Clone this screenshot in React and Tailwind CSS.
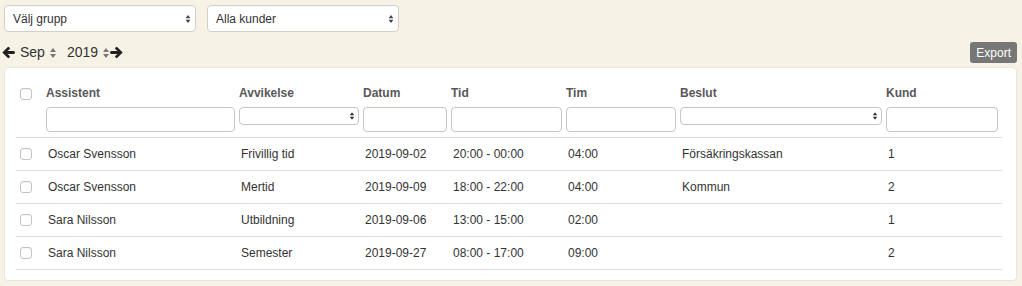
import React from "react";

function UpDown({ className = "" }) {
  return (
    <svg width="6" height="10" viewBox="0 0 6 10" className={className}>
      <path d="M3 0 L6 4 L0 4 Z" fill="currentColor" />
      <path d="M0 6 L6 6 L3 10 Z" fill="currentColor" />
    </svg>
  );
}

function Arrow({ dir = "left", className = "" }) {
  return (
    <svg width="13" height="13" viewBox="0 0 13 13" className={className} style={dir === "right" ? { transform: "scaleX(-1)" } : undefined}>
      <path
        d="M0.3 6.5 L5.6 1.2 Q6.3 0.5 7 1.2 L7.6 1.8 Q8.3 2.5 7.6 3.2 L5.4 5.1 H11.9 Q12.8 5.1 12.8 6 V7 Q12.8 7.9 11.9 7.9 H5.4 L7.6 9.8 Q8.3 10.5 7.6 11.2 L7 11.8 Q6.3 12.5 5.6 11.8 Z"
        fill="currentColor"
      />
    </svg>
  );
}

function Check() {
  return <div className="w-[12px] h-[12px] rounded-[3px] border border-[#c4c4c4] bg-white shadow-[inset_0_1px_1px_rgba(0,0,0,0.05)]" />;
}

function TopSelect({ label }) {
  return (
    <div className="w-[192px] h-[27px] bg-white border border-[#d2cfc6] rounded-[4px] flex items-center justify-between pl-[8px] pr-[4px] text-[12px] text-[#333]">
      <span>{label}</span>
      <UpDown className="text-[#444] scale-[0.8]" />
    </div>
  );
}

const rows = [
  ["Oscar Svensson", "Frivillig tid", "2019-09-02", "20:00 - 00:00", "04:00", "Försäkringskassan", "1"],
  ["Oscar Svensson", "Mertid", "2019-09-09", "18:00 - 22:00", "04:00", "Kommun", "2"],
  ["Sara Nilsson", "Utbildning", "2019-09-06", "13:00 - 15:00", "02:00", "", "1"],
  ["Sara Nilsson", "Semester", "2019-09-27", "08:00 - 17:00", "09:00", "", "2"],
];

function TextBox() {
  return <div className="w-full h-[25px] bg-white border border-[#c6c6c6] rounded-[4px]" />;
}
function SmallSelect() {
  return (
    <div className="w-full h-[18px] bg-white border border-[#c6c6c6] rounded-[4px] flex items-center justify-end pr-[3px]">
      <UpDown className="text-[#333] scale-[0.75]" />
    </div>
  );
}

export default function App() {
  const headers = [
    ["Assistent", <TextBox key="a" />],
    ["Avvikelse", <SmallSelect key="b" />],
    ["Datum", <TextBox key="c" />],
    ["Tid", <TextBox key="d" />],
    ["Tim", <TextBox key="e" />],
    ["Beslut", <SmallSelect key="f" />],
    ["Kund", <TextBox key="g" />],
  ];
  return (
    <div
      className="w-[1022px] h-[286px] bg-[#f6f2e6] pt-[5px] pl-[4px] pr-[5px] overflow-hidden"
      style={{ fontFamily: '"Liberation Sans", Arial, Helvetica, sans-serif' }}
    >
      <div className="flex gap-[11px]">
        <TopSelect label="Välj grupp" />
        <TopSelect label="Alla kunder" />
      </div>
      <div className="flex items-center justify-between mt-[10px] h-[21px]">
        <div className="flex items-center text-[14px] text-[#333] -ml-[2px]">
          <Arrow dir="left" className="text-[#222]" />
          <span className="ml-[5px]">Sep</span>
          <UpDown className="ml-[5px] text-[#777]" />
          <span className="ml-[11px]">2019</span>
          <UpDown className="ml-[5px] text-[#777]" />
          <Arrow dir="right" className="ml-[1px] text-[#222]" />
        </div>
        <div className="h-[21px] px-[6px] rounded-[3px] bg-[#777] text-white text-[12px] flex items-center">Export</div>
      </div>
      <div className="mt-[4px] h-[214px] bg-white border border-[#ebe6d9] rounded-[4px] pt-[16px] pl-[11px] pr-[14px]">
        <table className="table-fixed border-collapse w-[986px]">
          <colgroup>
            <col className="w-[28px]" />
            <col className="w-[193px]" />
            <col className="w-[124px]" />
            <col className="w-[88px]" />
            <col className="w-[115px]" />
            <col className="w-[114px]" />
            <col className="w-[206px]" />
            <col className="w-[118px]" />
          </colgroup>
          <thead>
            <tr className="border-b border-[#dddddd]">
              <th className="align-top pl-[4px] pt-[4px] pb-[6px]">
                <Check />
              </th>
              {headers.map(([h, el], i) => (
                <th key={h} className={"align-top text-left px-[2px] pb-[5px] " + (i === 6 ? "pr-[4px]" : "")}>
                  <div className="h-[18px] leading-[18px] text-[12px] font-bold text-[#585858]">{h}</div>
                  <div className="mt-[5px] h-[25px]">{el}</div>
                </th>
              ))}
            </tr>
          </thead>
          <tbody>
            {rows.map((r, i) => (
              <tr key={i} className="border-b border-[#dddddd] h-[33px]">
                <td className="pl-[4px] align-middle">
                  <Check />
                </td>
                {r.map((c, j) => (
                  <td key={j} className="pl-[4px] text-[12px] text-[#333] align-middle whitespace-nowrap">
                    {c}
                  </td>
                ))}
              </tr>
            ))}
          </tbody>
        </table>
      </div>
    </div>
  );
}
